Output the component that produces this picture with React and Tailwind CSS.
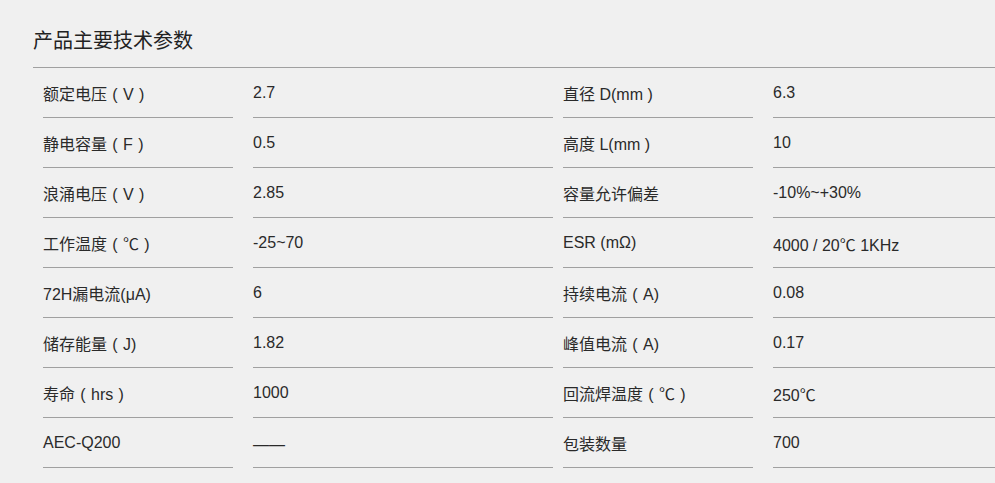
import React from 'react';

const rows = [
  ['额定电压（V）', '2.7', '直径 D(mm )', '6.3'],
  ['静电容量（F）', '0.5', '高度 L(mm )', '10'],
  ['浪涌电压（V）', '2.85', '容量允许偏差', '-10%~+30%'],
  ['工作温度（℃）', '-25~70', 'ESR (mΩ)', '4000 / 20℃ 1KHz'],
  ['72H漏电流(μA)', '6', '持续电流（A)', '0.08'],
  ['储存能量（J)', '1.82', '峰值电流（A)', '0.17'],
  ['寿命（hrs）', '1000', '回流焊温度（℃）', '250℃'],
  ['AEC-Q200', '——', '包装数量', '700'],
];

const cell = 'h-[50px] shrink-0 border-b border-[#a0a0a0] leading-[20px] whitespace-nowrap';

// full-width parens are drawn centred in their em box, like the source font does
const renderText = (text) =>
  text.split(/([（）])/).map((part, i) => {
    if (part === '（') return <span key={i} className="inline-block w-[16px] text-center">(</span>;
    if (part === '）') return <span key={i} className="inline-block w-[16px] text-center">)</span>;
    return <React.Fragment key={i}>{part}</React.Fragment>;
  });

const padFor = (text) => {
  if (/^[^\u4e00-\u9fff℃—（）]+$/.test(text)) return 'pt-[15px]';
  if (/^[^\u4e00-\u9fff]*℃/.test(text)) return 'pt-[18px]';
  return 'pt-[17px]';
};

const App = () => {
  return (
    <div
      className="w-[995px] h-[483px] overflow-hidden bg-[#f0f0f0] text-[#2a2a2a] text-[16px]"
      style={{ fontFamily: '"Liberation Sans", Arial, "Noto Sans CJK SC", sans-serif' }}
    >
      <div className="pl-[33px] pt-[26px]">
        <h2 className="text-[20px] leading-[30px] pb-[11px] border-b border-[#a0a0a0] text-[#222] font-normal">
          产品主要技术参数
        </h2>
        <ul className="w-[1100px]">
          {rows.map((r, i) => (
            <li key={i} className="flex">
              <div className={`${cell} ${padFor(r[0])} ml-[10px] w-[190px]`}>{renderText(r[0])}</div>
              <div className={`${cell} ${padFor(r[1])} ml-[20px] w-[300px]`}>{renderText(r[1])}</div>
              <div className={`${cell} ${padFor(r[2])} ml-[10px] w-[190px]`}>{renderText(r[2])}</div>
              <div className={`${cell} ${padFor(r[3])} ml-[20px] w-[300px]`}>{renderText(r[3])}</div>
            </li>
          ))}
        </ul>
      </div>
    </div>
  );
};

export default App;
